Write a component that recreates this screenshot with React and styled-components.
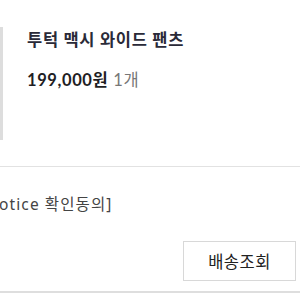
import React from 'react';
import styled, { createGlobalStyle } from 'styled-components';

const GlobalStyle = createGlobalStyle`
  body {
    margin: 0;
    background: #fff;
    font-family: Lato, "Noto Sans CJK KR", sans-serif;
  }
`;

const Page = styled.div`
  width: 300px;
  height: 300px;
  overflow: hidden;
  background: #fff;
`;

const Product = styled.div`
  display: flex;
  padding-top: 27px;
  height: 113px;
  padding-bottom: 26px;
  border-bottom: 1px solid #e2e2e2;
`;

const Thumb = styled.div`
  width: 3px;
  background: #dddddd;
  flex-shrink: 0;
`;

const Info = styled.div`
  padding-left: 24px;
  padding-top: 3px;
`;

const Title = styled.div`
  font-size: 16.5px;
  font-weight: 700;
  color: #2a2a38;
  letter-spacing: 0.7px;
  line-height: 20px;
`;

const PriceRow = styled.div`
  margin-top: 20px;
  font-size: 16.5px;
  line-height: 20px;
  letter-spacing: 0.6px;
`;

const Price = styled.span`
  font-weight: 700;
  color: #1e1e24;
`;

const Count = styled.span`
  color: #777;
  margin-left: 5px;
`;

const NoticeRow = styled.div`
  overflow: hidden;
  padding-top: 27px;
`;

const Notice = styled.div`
  margin-left: -20px;
  font-family: "Noto Sans", "Noto Sans CJK KR", sans-serif;
  font-size: 15.5px;
  line-height: 20px;
  letter-spacing: 1.1px;
  color: #444;
  white-space: nowrap;
`;

const Actions = styled.div`
  display: flex;
  justify-content: flex-end;
  padding: 27px 4px 10px 0;
  border-bottom: 2px solid #dedede;
`;

const Button = styled.button`
  width: 113px;
  height: 40px;
  background: #fff;
  border: 1px solid #d8d8d8;
  font-family: "Noto Sans CJK KR", sans-serif;
  font-size: 16.5px;
  color: #222;
  padding: 0;
  letter-spacing: 0.5px;
`;

export default function App() {
  return (
    <Page>
      <GlobalStyle />
      <Product>
        <Thumb />
        <Info>
          <Title>투턱 맥시 와이드 팬츠</Title>
          <PriceRow>
            <Price>199,000원</Price>
            <Count>1개</Count>
          </PriceRow>
        </Info>
      </Product>
      <NoticeRow>
        <Notice>[Notice 확인동의]</Notice>
      </NoticeRow>
      <Actions>
        <Button>배송조회</Button>
      </Actions>
    </Page>
  );
}
